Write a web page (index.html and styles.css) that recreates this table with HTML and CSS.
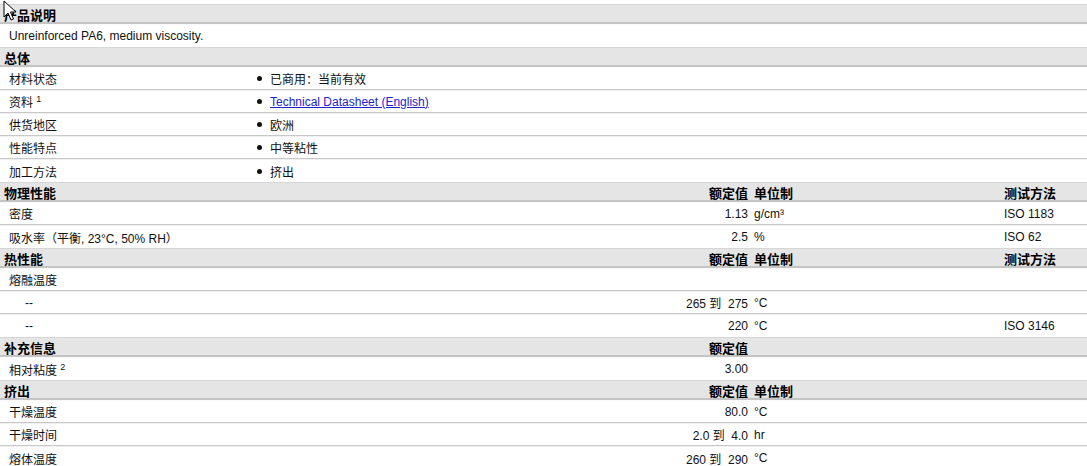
FILE: index.html
```html
<!DOCTYPE html>
<html lang="zh-CN">
<head>
    <meta charset="UTF-8">
    <title>产品说明</title>
    <link rel="stylesheet" href="styles.css">
</head>
<body>
    <svg class="cursor" width="14" height="22" viewBox="0 0 14 22">
        <path d="M1 1 L1 17 L5 13 L8 20 L10.5 19 L7.5 12 L13 12 Z" fill="#fff" stroke="#000" stroke-width="1"/>
    </svg>
    <div class="sheet">
        <div class="head"><div class="title">产品说明</div></div>
        <div class="row"><div class="desc">Unreinforced PA6, medium viscosity.</div></div>

        <div class="head"><div class="title">总体</div></div>
        <div class="row"><div class="label">材料状态</div><div class="list"><span class="dot"></span>已商用：当前有效</div></div>
        <div class="row"><div class="label">资料 <sup>1</sup></div><div class="list"><span class="dot"></span><a href="#">Technical Datasheet (English)</a></div></div>
        <div class="row"><div class="label">供货地区</div><div class="list"><span class="dot"></span>欧洲</div></div>
        <div class="row"><div class="label">性能特点</div><div class="list"><span class="dot"></span>中等粘性</div></div>
        <div class="row"><div class="label">加工方法</div><div class="list"><span class="dot"></span>挤出</div></div>

        <div class="head"><div class="title">物理性能</div><div class="value">额定值</div><div class="unit">单位制</div><div class="method">测试方法</div></div>
        <div class="row"><div class="label">密度</div><div class="value">1.13</div><div class="unit">g/cm³</div><div class="method">ISO 1183</div></div>
        <div class="row"><div class="label">吸水率（平衡, 23°C, 50% RH）</div><div class="value">2.5</div><div class="unit">%</div><div class="method">ISO 62</div></div>

        <div class="head"><div class="title">热性能</div><div class="value">额定值</div><div class="unit">单位制</div><div class="method">测试方法</div></div>
        <div class="row"><div class="label">熔融温度</div></div>
        <div class="row"><div class="label sub">--</div><div class="value">265 到&nbsp; 275</div><div class="unit">°C</div></div>
        <div class="row"><div class="label sub">--</div><div class="value">220</div><div class="unit">°C</div><div class="method">ISO 3146</div></div>

        <div class="head"><div class="title">补充信息</div><div class="value">额定值</div></div>
        <div class="row"><div class="label">相对粘度 <sup>2</sup></div><div class="value">3.00</div></div>

        <div class="head"><div class="title">挤出</div><div class="value">额定值</div><div class="unit">单位制</div></div>
        <div class="row"><div class="label">干燥温度</div><div class="value">80.0</div><div class="unit">°C</div></div>
        <div class="row"><div class="label">干燥时间</div><div class="value">2.0 到&nbsp; 4.0</div><div class="unit">hr</div></div>
        <div class="row"><div class="label">熔体温度</div><div class="value">260 到&nbsp; 290</div><div class="unit">°C</div></div>
    </div>
</body>
</html>
```

FILE: styles.css
```css
body {
    margin: 0;
    padding-top: 4px;
    background-color: #fff;
    color: #111;
    font-family: "Liberation Sans", Arial, "Noto Sans CJK SC", sans-serif;
    font-size: 12px;
    overflow: hidden;
}
.cursor {
    position: absolute;
    left: 3px;
    top: 0;
}
.head,
.row {
    display: grid;
    grid-template-columns: 252px 498px 250px 1fr;
    align-items: center;
    box-sizing: border-box;
}
.head {
    height: 20px;
    background-color: #e5e5e5;
    border-top: 1px solid #d6d6d6;
    border-bottom: 2px solid #c4c4c4;
    font-weight: bold;
    font-size: 13px;
    color: #000;
}
.row {
    height: 23px;
    border-top: 1px solid #f0f0f0;
    border-bottom: 1px solid #c8c8c8;
}
.row:last-child {
    border-bottom: none;
}
.head + .row {
    border-top: 1px solid #fafafa;
}
.row:has(+ .head) {
    border-bottom: none;
}
.title {
    padding-left: 4px;
}
.desc {
    grid-column: 1 / -1;
    padding-left: 9px;
}
.label {
    padding-left: 9px;
    white-space: nowrap;
}
.label.sub {
    padding-left: 25px;
}
.label sup {
    font-size: 9px;
    vertical-align: 5px;
    line-height: 0;
}
.list {
    grid-column: 2 / -1;
    display: flex;
    align-items: center;
    padding-left: 5px;
}
.dot {
    width: 5px;
    height: 5px;
    border-radius: 50%;
    background-color: #111;
    margin-right: 8px;
}
.list a {
    color: #2222cc;
}
.value {
    grid-column: 2;
    text-align: right;
    padding-right: 2px;
    white-space: nowrap;
}
.unit {
    grid-column: 3;
    padding-left: 4px;
}
.method {
    grid-column: 4;
    padding-left: 4px;
}
```
